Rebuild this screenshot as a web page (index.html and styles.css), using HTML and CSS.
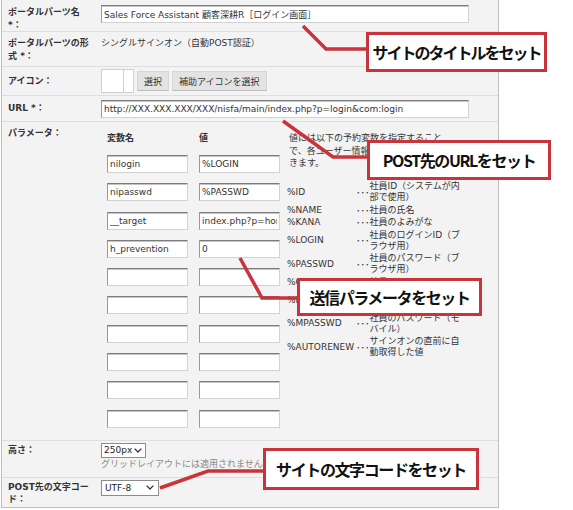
FILE: index.html
```html
<!DOCTYPE html>
<html lang="ja">
<head>
<meta charset="utf-8">
<title>ポータルパーツ設定</title>
<link rel="stylesheet" href="styles.css">
</head>
<body>
<div class="page">
  <div class="form">
    <div class="row row-name">
      <div class="label">ポータルパーツ名 *：</div>
      <div class="field"><input class="text wide" type="text" value="Sales Force Assistant 顧客深耕R［ログイン画面］"></div>
    </div>
    <div class="row row-type">
      <div class="label">ポータルパーツの形式 *：</div>
      <div class="field">シングルサインオン（自動POST認証）</div>
    </div>
    <div class="row row-icon">
      <div class="label">アイコン：</div>
      <div class="field icon-field">
        <span class="iconbox"><span class="ib-main"></span><span class="ib-side"></span></span>
        <button class="btn" type="button">選択</button>
        <button class="btn" type="button">補助アイコンを選択</button>
      </div>
    </div>
    <div class="row row-url">
      <div class="label">URL *：</div>
      <div class="field"><input class="text wide" type="text" value="http://XXX.XXX.XXX/XXX/nisfa/main/index.php?p=login&amp;com:login"></div>
    </div>
    <div class="row row-params">
      <div class="label">パラメータ：</div>
      <div class="field">
        <div class="params">
          <div class="ph">変数名</div>
          <div class="ph">値</div>
          <div class="desc">
            <p class="intro">値には以下の予約変数を指定することで、各ユーザー情報を入れることができます。</p>
            <table class="vars">
              <tr><td class="k">%ID</td><td class="d">･･･</td><td class="v">社員ID（システムが内部で使用）</td></tr>
              <tr><td class="k">%NAME</td><td class="d">･･･</td><td class="v">社員の氏名</td></tr>
              <tr><td class="k">%KANA</td><td class="d">･･･</td><td class="v">社員のよみがな</td></tr>
              <tr><td class="k">%LOGIN</td><td class="d">･･･</td><td class="v">社員のログインID（ブラウザ用）</td></tr>
              <tr><td class="k">%PASSWD</td><td class="d">･･･</td><td class="v">社員のパスワード（ブラウザ用）</td></tr>
              <tr><td class="k">%CODE</td><td class="d">･･･</td><td class="v">社員コード</td></tr>
              <tr><td class="k">%MLOGIN</td><td class="d">･･･</td><td class="v">社員のログインID（モバイル）</td></tr>
              <tr><td class="k">%MPASSWD</td><td class="d">･･･</td><td class="v">社員のパスワード（モバイル）</td></tr>
              <tr><td class="k">%AUTORENEW</td><td class="d">･･･</td><td class="v">サインオンの直前に自動取得した値</td></tr>
            </table>
          </div>
          <input class="text pin" type="text" value="nilogin"><input class="text pin" type="text" value="%LOGIN">
          <input class="text pin" type="text" value="nipasswd"><input class="text pin" type="text" value="%PASSWD">
          <input class="text pin" type="text" value="__target"><input class="text pin" type="text" value="index.php?p=home">
          <input class="text pin" type="text" value="h_prevention"><input class="text pin" type="text" value="0">
          <input class="text pin" type="text" value=""><input class="text pin" type="text" value="">
          <input class="text pin" type="text" value=""><input class="text pin" type="text" value="">
          <input class="text pin" type="text" value=""><input class="text pin" type="text" value="">
          <input class="text pin" type="text" value=""><input class="text pin" type="text" value="">
          <input class="text pin" type="text" value=""><input class="text pin" type="text" value="">
          <input class="text pin" type="text" value=""><input class="text pin" type="text" value="">
        </div>
      </div>
    </div>
    <div class="row row-height">
      <div class="label">高さ：</div>
      <div class="field">
        <span class="select sel-height"><span>250px</span><svg class="chev" width="8" height="5" viewBox="0 0 8 5"><path d="M0.6 0.6 L4 4 L7.4 0.6" fill="none" stroke="#333" stroke-width="1.3"/></svg></span>
        <div class="note">グリッドレイアウトには適用されません。</div>
      </div>
    </div>
    <div class="row row-charset">
      <div class="label">POST先の文字コード：</div>
      <div class="field">
        <span class="select sel-charset"><span>UTF-8</span><svg class="chev" width="8" height="5" viewBox="0 0 8 5"><path d="M0.6 0.6 L4 4 L7.4 0.6" fill="none" stroke="#333" stroke-width="1.3"/></svg></span>
      </div>
    </div>
  </div>

  <svg class="leaders" width="573" height="510" viewBox="0 0 573 510">
    <polyline points="303,26 326,49 368,49"/>
    <polyline points="283,121 333,157 369,157"/>
    <polyline points="240,258 262,298 299,298"/>
    <polyline points="160,488 208,471 266,471"/>
  </svg>
  <div class="callout c1">サイトのタイトルをセット</div>
  <div class="callout c2">POST先のURLをセット</div>
  <div class="callout c3">送信パラメータをセット</div>
  <div class="callout c4">サイトの文字コードをセット</div>
</div>
</body>
</html>
```
FILE: styles.css
```css
html, body {
  margin: 0;
  padding: 0;
  background: #fff;
}
body {
  font-family: "DejaVu Sans", "Noto Sans CJK JP", sans-serif;
  font-size: 9px;
  line-height: 12.5px;
  color: #333;
}
.page {
  position: relative;
  width: 573px;
  height: 510px;
  overflow: hidden;
}
.form {
  margin-left: 1px;
  width: 498px;
  box-sizing: border-box;
  background: #f3f3f3;
  border: 1px solid #bdbdbd;
  border-top: none;
}
.row {
  display: flex;
  border-bottom: 1px solid #dedede;
}
.label {
  flex: none;
  width: 85px;
  padding: 0 8px 0 6px;
  font-weight: bold;
  color: #333;
}
.field {
  flex: 1;
  min-width: 0;
}
.text {
  box-sizing: border-box;
  height: 18px;
  margin: 0;
  padding: 0 2px;
  font-family: "DejaVu Sans", "Noto Sans CJK JP", sans-serif;
  font-size: 9px;
  color: #333;
  background: #fff;
  border: 1px solid #d2d2d2;
  border-top-color: #7c7c7c;
  border-left-color: #9a9a9a;
  box-shadow: inset 0 1px 0 #c4c4c4;
  border-radius: 0;
  outline: none;
}
.wide { width: 368px; display: block; }

.row-name { padding-top: 5px; }
.row-name .label { padding-top: 1px; }
.row-type { padding: 5px 0 4px; }
.row-icon { padding: 2px 0; align-items: center; }
.row-url { padding: 4px 0 3px; }
.row-url .label { padding-top: 2px; }
.row-params { padding: 5px 0 2px; }
.row-height { padding: 2px 0 6.5px; }
.row-height .label { padding-top: 1px; }
.row-charset { padding: 2px 0 1px; border-bottom: none; }
.row-charset .label { padding-top: 1px; }

.icon-field {
  display: flex;
  align-items: center;
}
.iconbox {
  display: flex;
  height: 24px;
  margin-right: 3px;
}
.ib-main, .ib-side {
  display: block;
  box-sizing: border-box;
  height: 24px;
  background: #fff;
  border: 1px solid #d0d0d0;
}
.ib-main { width: 23px; }
.ib-side { width: 10px; border-left: none; }
.btn {
  box-sizing: border-box;
  height: 20px;
  margin: 0 3px 0 0;
  padding: 0 6px;
  font-family: "DejaVu Sans", "Noto Sans CJK JP", sans-serif;
  font-size: 9px;
  color: #333;
  background: #e3e3e3;
  border: 1px solid #d6d6d6;
  border-bottom-color: #bdbdbd;
  border-radius: 1px;
}

.params {
  display: grid;
  margin-left: 6px;
  padding-top: 5px;
  grid-template-columns: 92px 87px 1fr;
  grid-template-rows: 23px repeat(10, 28.3px);
  align-items: start;
}
.ph {
  font-weight: bold;
}
.pin {
  width: 81px;
}
.params .pin:nth-of-type(odd) { grid-column: 1; }
.params .pin:nth-of-type(even) { grid-column: 2; }
.desc {
  grid-column: 3;
  grid-row: 1 / span 11;
  color: #333;
}
.intro {
  margin: 0;
  padding-left: 3px;
  width: 156px;
}
.vars {
  margin-top: 11px;
  border-collapse: collapse;
}
.vars td {
  padding: 0.75px 0;
  line-height: 11px;
  vertical-align: middle;
}
.vars .k {
  width: 69px;
  white-space: nowrap;
  padding-left: 1px;
}
.vars .d {
  white-space: nowrap;
  font-family: "Noto Sans CJK JP", sans-serif;
}
.vars .v {
  width: 95px;
}

.select {
  display: flex;
  align-items: center;
  justify-content: space-between;
  box-sizing: border-box;
  height: 16px;
  padding: 0 3px 0 2px;
  background: #fff;
  border: 1px solid #8c8c8c;
  color: #222;
}
.sel-height { width: 45px; height: 15px; }
.sel-charset { width: 58px; padding-left: 3px; padding-right: 4px; }
.chev { display: block; flex: none; }
.note {
  color: #8a8a8a;
}

.leaders {
  position: absolute;
  left: 0;
  top: 0;
  pointer-events: none;
}
.leaders polyline {
  fill: none;
  stroke: #c9343c;
  stroke-width: 3.5;
}
.callout {
  position: absolute;
  box-sizing: border-box;
  display: flex;
  align-items: center;
  justify-content: center;
  white-space: nowrap;
  background: #fff;
  border: 3px solid #c9343c;
  font-family: "Noto Sans CJK JP", sans-serif;
  font-weight: bold;
  font-size: 16px;
  letter-spacing: -1.4px;
  color: #111;
}
.c1 { left: 366px; top: 32px; width: 181px; height: 40px; letter-spacing: -2px; }
.c2 { left: 367px; top: 140px; width: 184px; height: 40px; }
.c3 { left: 297px; top: 278px; width: 185px; height: 38px; }
.c4 { left: 263px; top: 448px; width: 216px; height: 42px; }
```
